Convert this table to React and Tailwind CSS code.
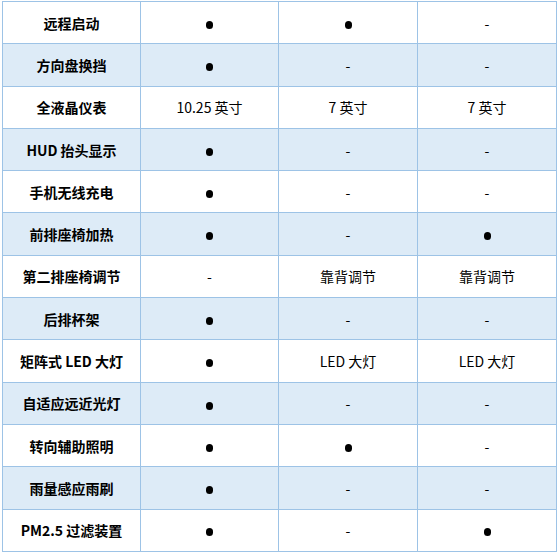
const rows = [
    ["远程启动", "●", "●", "-"],
    ["方向盘换挡", "●", "-", "-"],
    ["全液晶仪表", "10.25 英寸", "7 英寸", "7 英寸"],
    ["HUD 抬头显示", "●", "-", "-"],
    ["手机无线充电", "●", "-", "-"],
    ["前排座椅加热", "●", "-", "●"],
    ["第二排座椅调节", "-", "靠背调节", "靠背调节"],
    ["后排杯架", "●", "-", "-"],
    ["矩阵式 LED 大灯", "●", "LED 大灯", "LED 大灯"],
    ["自适应远近光灯", "●", "-", "-"],
    ["转向辅助照明", "●", "●", "-"],
    ["雨量感应雨刷", "●", "-", "-"],
    ["PM2.5 过滤装置", "●", "-", "●"],
];

const Cell = ({ value }) => {
    if (value === "●") {
        // small solid dot, as in the source sheet
        return <span className="inline-block w-[7px] h-[8px] rounded-full bg-black align-middle"></span>;
    }
    return <span>{value}</span>;
};

const App = () => {
    return (
        <div className="w-[560px] h-[556px] bg-white pt-px pl-[2px] font-['Noto_Sans_CJK_SC',sans-serif] text-[14px] text-black">
            <table className="border-collapse table-fixed w-[554px]">
                <colgroup>
                    <col className="w-[138px]" />
                    <col className="w-[138px]" />
                    <col className="w-[139px]" />
                    <col className="w-[139px]" />
                </colgroup>
                <tbody>
                    {rows.map((row, i) => (
                        <tr
                            key={row[0]}
                            className={`h-[42.3px] ${i % 2 === 1 ? "bg-[#ddebf7]" : "bg-white"}`}
                        >
                            <td className="border border-[#9dc3e6] text-center font-bold p-0 leading-none">
                                {row[0]}
                            </td>
                            {row.slice(1).map((v, j) => (
                                <td
                                    key={j}
                                    className="border border-[#9dc3e6] text-center p-0 leading-none"
                                >
                                    <Cell value={v} />
                                </td>
                            ))}
                        </tr>
                    ))}
                </tbody>
            </table>
        </div>
    );
};

export default App;
